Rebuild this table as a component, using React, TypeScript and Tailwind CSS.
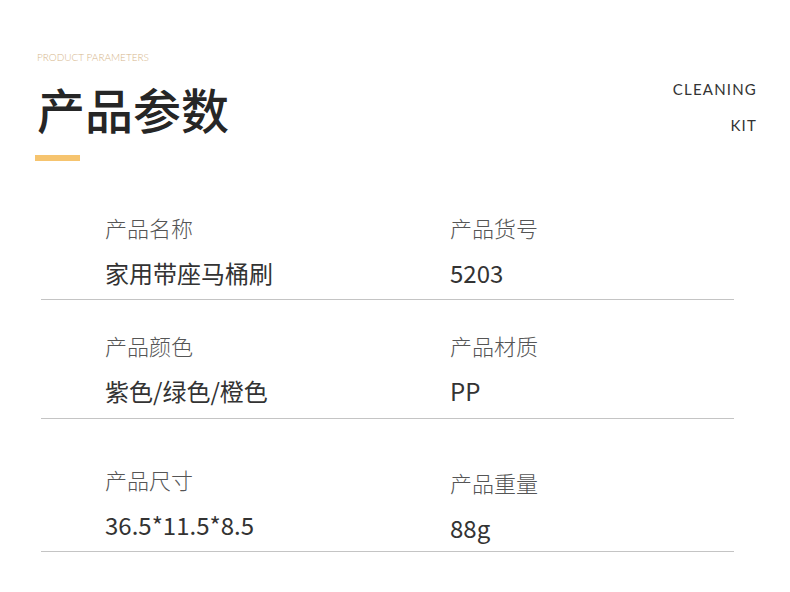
import React from "react";

const cjk = { fontFamily: '"Noto Sans CJK SC", "Noto Sans", sans-serif' };

type Cell = { label: string; value: string };

function Row({
  left,
  right,
  pt,
  gap,
  pb,
  rightShift = 0,
}: {
  left: Cell;
  right: Cell;
  pt: string;
  gap: string;
  pb: string;
  rightShift?: number;
}) {
  return (
    <div className={`flex border-b border-[#c4c4c4] ${pt} ${pb}`}>
      <div className="w-[409px] pl-[64px] flex flex-col">
        <div className="text-[22px] leading-[30px] text-[#555] font-light">{left.label}</div>
        <div className={`text-[24px] leading-[34px] text-[#333] ${gap}`}>{left.value}</div>
      </div>
      <div className={`flex flex-col ${rightShift ? "pt-[3px]" : ""}`}>
        <div className="text-[22px] leading-[30px] text-[#555] font-light">{right.label}</div>
        <div className={`text-[24px] leading-[34px] text-[#333] ${gap}`}>{right.value}</div>
      </div>
    </div>
  );
}

export default function App() {
  return (
    <div className="w-[790px] h-[592px] bg-white relative overflow-hidden" style={cjk}>
      <div className="flex justify-between">
        <div className="pl-[37px] pt-[52px]">
          <div
            className="text-[10px] leading-[10px] text-[#d6b68c] font-light"
            style={{ fontFamily: 'Lato, "Noto Sans", sans-serif' }}
          >
            PRODUCT PARAMETERS
          </div>
          <div className="mt-[22px] text-[48px] leading-[48px] font-medium text-[#262626]">
            产品参数
          </div>
          <div className="mt-[23px] ml-[-2px] w-[45px] h-[6px] bg-[#f6c46f]" />
        </div>
        <div
          className="pt-[80px] pr-[33px] flex flex-col items-end text-[15px] leading-[18px] text-[#333] tracking-[1.2px]"
          style={{ fontFamily: 'Lato, "Noto Sans", sans-serif' }}
        >
          <div>CLEANING</div>
          <div className="mt-[18px]">KIT</div>
        </div>
      </div>

      <div className="ml-[41px] w-[693px] mt-[51px]">
        <Row
          left={{ label: "产品名称", value: "家用带座马桶刷" }}
          right={{ label: "产品货号", value: "5203" }}
          pt="pt-[0px]"
          gap="mt-[14px]"
          pb="pb-[9px]"
        />
        <Row
          left={{ label: "产品颜色", value: "紫色/绿色/橙色" }}
          right={{ label: "产品材质", value: "PP" }}
          pt="pt-[30px]"
          gap="mt-[14px]"
          pb="pb-[10px]"
        />
        <Row
          left={{ label: "产品尺寸", value: "36.5*11.5*8.5" }}
          right={{ label: "产品重量", value: "88g" }}
          pt="pt-[45px]"
          gap="mt-[14px]"
          pb="pb-[6px]"
          rightShift={3}
        />
      </div>
    </div>
  );
}
